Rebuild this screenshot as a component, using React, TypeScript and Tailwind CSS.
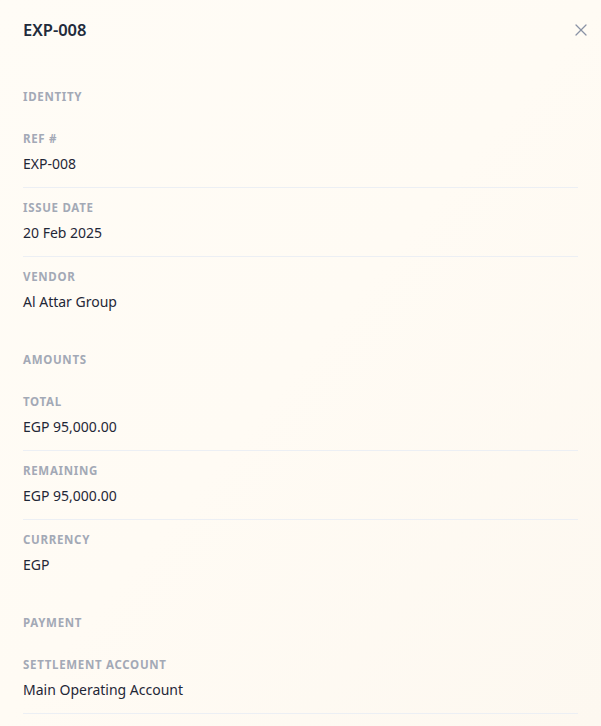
import { X } from "lucide-react"

interface FieldInterface {
    label: string,
    value: string
}

interface SectionInterface {
    title: string,
    fields: FieldInterface[],
    openEnd?: boolean
}

const sections: SectionInterface[] = [
    {
        title: 'Identity',
        fields: [
            { label: 'Ref #', value: 'EXP-008' },
            { label: 'Issue Date', value: '20 Feb 2025' },
            { label: 'Vendor', value: 'Al Attar Group' },
        ]
    },
    {
        title: 'Amounts',
        fields: [
            { label: 'Total', value: 'EGP 95,000.00' },
            { label: 'Remaining', value: 'EGP 95,000.00' },
            { label: 'Currency', value: 'EGP' },
        ]
    },
    {
        title: 'Payment',
        fields: [
            { label: 'Settlement Account', value: 'Main Operating Account' },
        ],
        openEnd: true
    },
]

const Field = ({ field, divided }: { field: FieldInterface, divided: boolean }) => {
    return (
        <div className={`pt-3 pb-[13px] ${divided ? 'border-b border-[#eceff4]' : ''}`}>
            <p className="text-[11.5px] leading-4 font-bold uppercase tracking-[0.06em] text-[#a3a9b6]">{field.label}</p>
            <p className="mt-[7px] text-[14px] leading-5 text-[#1f2737]">{field.value}</p>
        </div>
    )
}

const App = () => {
    return (
        <div
            className="w-full h-[726px] overflow-hidden bg-gradient-to-br from-[#fffcf6] via-[#fffbf4] to-[#fdf8f0]"
            style={{ fontFamily: '"Noto Sans", "Open Sans", sans-serif' }}
        >
            <div className="h-[60px] px-[23px] flex items-center justify-between">
                <h2 className="text-[16.5px] leading-6 font-semibold text-[#222b3b]">EXP-008</h2>
                <button className="w-6 h-6 -mr-[15px] flex items-center justify-center text-[#8a92a5]">
                    <X size={20} strokeWidth={1.5} />
                </button>
            </div>

            <div className="px-[23px] pt-[29px] flex flex-col gap-[27px]">
                {sections.map((section) => (
                    <div key={section.title}>
                        <h3 className="text-[11.5px] leading-4 font-bold uppercase tracking-[0.06em] text-[#a3a9b6] mb-[14px]">{section.title}</h3>
                        <div>
                            {section.fields.map((field, i) => (
                                <Field
                                    key={field.label}
                                    field={field}
                                    divided={i < section.fields.length - 1 || !!section.openEnd}
                                />
                            ))}
                        </div>
                    </div>
                ))}
            </div>
        </div>
    )
}

export default App
